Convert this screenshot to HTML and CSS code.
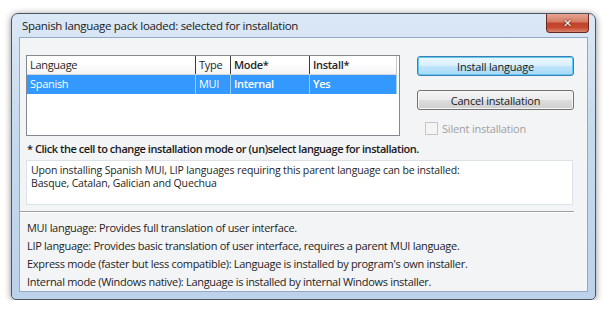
FILE: index.html
```html
<!DOCTYPE html>
<html lang="en">

<head>
    <meta charset="UTF-8">
    <meta name="viewport" content="width=device-width, initial-scale=1.0">
    <title>Spanish language pack loaded</title>
    <link rel="stylesheet" href="styles.css">
</head>

<body>
    <div class="window">
        <div class="titleBar">
            <span class="title">Spanish language pack loaded: selected for installation</span>
            <button class="closeBtn">&#x2715;</button>
        </div>
        <div class="client">
            <div class="topRow">
                <div class="listView">
                    <div class="row header">
                        <div class="cell colLang">Language</div>
                        <div class="cell colType">Type</div>
                        <div class="cell colMode bold">Mode*</div>
                        <div class="cell colInstall bold">Install*</div>
                    </div>
                    <div class="row selected">
                        <div class="cell colLang">Spanish</div>
                        <div class="cell colType">MUI</div>
                        <div class="cell colMode bold">Internal</div>
                        <div class="cell colInstall bold">Yes</div>
                    </div>
                </div>
                <div class="actions">
                    <button class="btn default">Install language</button>
                    <button class="btn">Cancel installation</button>
                    <label class="check disabled"><span class="box"></span>Silent installation</label>
                </div>
            </div>
            <p class="note">* Click the cell to change installation mode or (un)select language for installation.</p>
            <div class="textBox">
                <p>Upon installing Spanish MUI, LIP languages requiring this parent language can be installed:</p>
                <p>Basque, Catalan, Galician and Quechua</p>
            </div>
            <div class="separator"></div>
            <ul class="legend">
                <li>MUI language: Provides full translation of user interface.</li>
                <li>LIP language: Provides basic translation of user interface, requires a parent MUI language.</li>
                <li>Express mode (faster but less compatible): Language is installed by program's own installer.</li>
                <li>Internal mode (Windows native): Language is installed by internal Windows installer.</li>
            </ul>
        </div>
    </div>
</body>

</html>
```

FILE: styles.css
```css
* {
    margin: 0;
    padding: 0;
    box-sizing: border-box;
}

body {
    background-color: #ffffff;
    font-family: "Open Sans", "Noto Sans", sans-serif;
    font-size: 11px;
    color: #1e1e1e;
    padding: 13px 0 0 11px;
}

.window {
    width: 585px;
    height: 287px;
    display: flex;
    flex-direction: column;
    border: 1px solid #4b5563;
    border-radius: 7px 7px 5px 5px;
    background: linear-gradient(180deg, #dbe8f6 0%, #c6daee 40%, #bcd2ea 100%);
    box-shadow: 0 1px 7px rgba(0, 0, 0, 0.45);
    padding: 0 7px 7px 7px;
}

.titleBar {
    height: 23px;
    display: flex;
    justify-content: space-between;
    align-items: flex-start;
}

.title {
    padding: 4px 0 0 3px;
    font-size: 11.5px;
    letter-spacing: -0.3px;
    color: #1a1a1a;
}

.closeBtn {
    width: 43px;
    height: 19px;
    margin-right: -1px;
    border: 1px solid #6b2a1e;
    border-top: none;
    border-radius: 0 0 4px 4px;
    background: linear-gradient(180deg, #e8a592 0%, #d47a63 45%, #c0432b 50%, #c5492f 75%, #d9866f 100%);
    color: #ffffff;
    font-weight: bold;
    font-size: 11px;
    line-height: 17px;
    text-shadow: 0 0 2px #4d1a10, 0 0 1px #4d1a10;
    font-family: "DejaVu Sans", sans-serif;
}

.client {
    flex: 1;
    border: 1px solid #91a9c4;
    background-color: #f3f4f6;
    padding: 17px 0 0 6px;
    display: flex;
    flex-direction: column;
}

.topRow {
    display: flex;
    gap: 17px;
    height: 81px;
}

.listView {
    width: 374px;
    height: 81px;
    border: 1px solid #828790;
    background-color: #ffffff;
}

.row {
    display: flex;
    height: 19px;
}

.row .cell {
    padding: 0 3px;
    line-height: 18px;
    white-space: nowrap;
    overflow: hidden;
    letter-spacing: -0.3px;
}

.bold {
    font-weight: 600;
}

.colLang {
    width: 169px;
}

.colType {
    width: 35px;
}

.colMode {
    width: 79px;
}

.colInstall {
    width: 87px;
}

.header {
    background: linear-gradient(180deg, #ffffff 0%, #ffffff 40%, #f3f4f6 100%);
    border-bottom: 1px solid #d5d5d5;
    margin-right: 2px;
    color: #262626;
}

.header .cell {
    border-right: 1px solid #3a3a3a;
}

.header .cell:last-child {
    border-right: 1px solid #c9c9c9;
}

.selected {
    background-color: #3399ff;
    color: #ffffff;
    margin-right: 2px;
}

.selected .cell {
    border-right: 1px solid #9ccbf8;
}

.actions {
    width: 157px;
    display: flex;
    flex-direction: column;
    padding-top: 1px;
}

.btn {
    height: 21px;
    border: 1px solid #707070;
    border-radius: 3px;
    background: linear-gradient(180deg, #f4f4f4 0%, #ebebeb 48%, #dddddd 52%, #cfcfcf 100%);
    font-family: inherit;
    font-size: 11px;
    letter-spacing: -0.2px;
    color: #1a1a1a;
    margin-bottom: 14px;
    box-shadow: inset 0 0 0 1px #f8f8f8;
}

.btn.default {
    border-color: #3c7fb1;
    background: linear-gradient(180deg, #eaf6fd 0%, #d9f0fc 48%, #bee6fd 52%, #a7d9f5 100%);
    box-shadow: inset 0 0 0 1px #60c8f5;
}

.check {
    display: flex;
    align-items: center;
    gap: 4px;
    padding-left: 8px;
    margin-top: -3px;
    color: #a0a0a0;
    letter-spacing: -0.2px;
}

.check .box {
    width: 13px;
    height: 13px;
    border: 1px solid #c6c6c6;
    background-color: #f4f4f4;
}

.note {
    font-weight: 600;
    padding: 5px 0 0 1px;
    height: 23px;
    letter-spacing: -0.45px;
    color: #1a1a1a;
}

.textBox {
    width: 547px;
    height: 45px;
    margin-top: 1px;
    background-color: #ffffff;
    border: 1px solid #dde2e8;
    padding: 3px 0 0 4px;
    font-size: 10.5px;
    line-height: 13px;
    letter-spacing: -0.15px;
}

.separator {
    height: 1px;
    width: 554px;
    margin: 6px 0 0 -6px;
    background-color: #a0a0a0;
    border-bottom: 1px solid #ffffff;
    box-sizing: content-box;
}

.legend {
    list-style: none;
    padding: 6px 0 0 1px;
    letter-spacing: -0.3px;
}

.legend li {
    height: 18px;
    line-height: 18px;
}
```
